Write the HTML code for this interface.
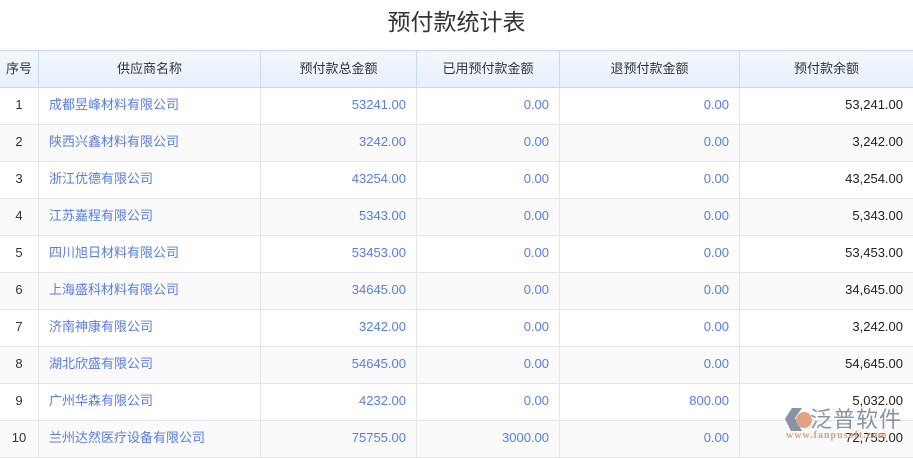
<!DOCTYPE html><html><head><meta charset="utf-8"><style>
body{margin:0;width:913px;height:451px;overflow:hidden;background:#fff;font-family:"Liberation Sans","Noto Sans CJK SC",sans-serif;font-size:13px;position:relative}
h1{margin:0;position:absolute;top:7px;left:0;width:913px;text-align:center;font-weight:normal;font-size:23px;color:#333;line-height:30px}
table{position:absolute;top:50px;left:-1px;border-collapse:collapse;table-layout:fixed;width:914px}
th{height:36px;background:linear-gradient(#f3f7fd,#e6effb);border:1px solid #c9d9ee;font-weight:normal;color:#333;padding:0;line-height:14px}
td{height:34px;border:1px solid #e3e6ea;padding:0 10px 2px;color:#5a7ee0;line-height:14px}
tr:nth-child(odd) td{background:#fafafa}
td:first-child{text-align:center;color:#333;padding:0 0 2px}
td.r{text-align:right}
td.k{color:#222}
</style></head><body>
<h1>预付款统计表</h1>
<table>
<colgroup><col style="width:39px"><col style="width:222px"><col style="width:156px"><col style="width:143px"><col style="width:180px"><col style="width:174px"></colgroup>
<tr><th>序号</th><th>供应商名称</th><th>预付款总金额</th><th>已用预付款金额</th><th>退预付款金额</th><th>预付款余额</th></tr>
<tr><td>1</td><td>成都昱峰材料有限公司</td><td class="r">53241.00</td><td class="r">0.00</td><td class="r">0.00</td><td class="r k">53,241.00</td></tr>
<tr><td>2</td><td>陕西兴鑫材料有限公司</td><td class="r">3242.00</td><td class="r">0.00</td><td class="r">0.00</td><td class="r k">3,242.00</td></tr>
<tr><td>3</td><td>浙江优德有限公司</td><td class="r">43254.00</td><td class="r">0.00</td><td class="r">0.00</td><td class="r k">43,254.00</td></tr>
<tr><td>4</td><td>江苏嘉程有限公司</td><td class="r">5343.00</td><td class="r">0.00</td><td class="r">0.00</td><td class="r k">5,343.00</td></tr>
<tr><td>5</td><td>四川旭日材料有限公司</td><td class="r">53453.00</td><td class="r">0.00</td><td class="r">0.00</td><td class="r k">53,453.00</td></tr>
<tr><td>6</td><td>上海盛科材料有限公司</td><td class="r">34645.00</td><td class="r">0.00</td><td class="r">0.00</td><td class="r k">34,645.00</td></tr>
<tr><td>7</td><td>济南神康有限公司</td><td class="r">3242.00</td><td class="r">0.00</td><td class="r">0.00</td><td class="r k">3,242.00</td></tr>
<tr><td>8</td><td>湖北欣盛有限公司</td><td class="r">54645.00</td><td class="r">0.00</td><td class="r">0.00</td><td class="r k">54,645.00</td></tr>
<tr><td>9</td><td>广州华森有限公司</td><td class="r">4232.00</td><td class="r">0.00</td><td class="r">800.00</td><td class="r k">5,032.00</td></tr>
<tr><td>10</td><td>兰州达然医疗设备有限公司</td><td class="r">75755.00</td><td class="r">3000.00</td><td class="r">0.00</td><td class="r k">72,755.00</td></tr>
</table>
<div style="position:absolute;left:783px;top:405px;width:40px;height:30px">
<svg width="40" height="30"><path d="M9 3 L19 3 L12 13 L19 26 L8 26 L2 14Z" fill="#8893a3"/><circle cx="21" cy="15" r="8" fill="#e3a27f"/></svg></div>
<div style="position:absolute;left:810px;top:402px;font-size:22px;color:#8893a3;letter-spacing:1px">泛普软件</div>
<div style="position:absolute;left:786px;top:430px;font-size:10px;color:#d9a080;font-family:'Liberation Serif',serif;font-weight:bold;letter-spacing:1px">www.fanpusoft.com</div>
</body></html>
